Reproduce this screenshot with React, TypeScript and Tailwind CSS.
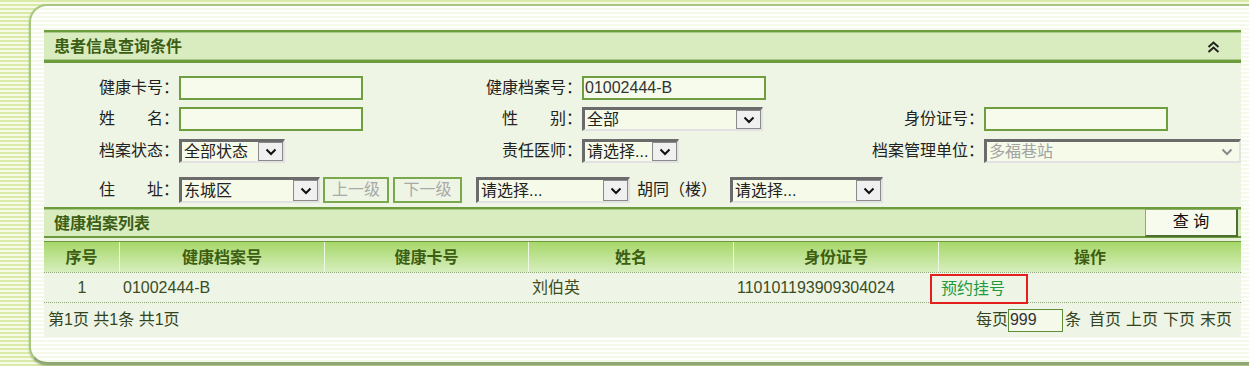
import React from "react";

const Chevron = ({ color = "#111" }: { color?: string }) => (
  <svg width="12" height="8" viewBox="0 0 12 8">
    <path d="M1.5 1.5 L6 6 L10.5 1.5" fill="none" stroke={color} strokeWidth="2" />
  </svg>
);

function Sel({ cls, text, disabled }: { cls: string; text: string; disabled?: boolean }) {
  return (
    <div
      className={`${cls} flex items-stretch border-t-[3px] border-l-[3px] border-t-[#6b6b6b] border-l-[#6b6b6b] border-r-2 border-b-2 border-r-[#e2e2e2] border-b-[#e2e2e2] bg-[#f5fae9]`}
    >
      <span
        className={`flex-1 pl-[2px] text-[16px] leading-none flex items-center whitespace-nowrap overflow-hidden ${
          disabled ? "text-[#a3a3a3]" : "text-[#222]"
        }`}
      >
        {text}
      </span>
      {disabled ? (
        <span className="w-[24px] flex items-center justify-center">
          <Chevron color="#8a8a8a" />
        </span>
      ) : (
        <span className="w-[25px] border border-[#8a8a8a] bg-[#f0f0f0] flex items-center justify-center">
          <Chevron />
        </span>
      )}
    </div>
  );
}

function Inp({ cls, text }: { cls: string; text?: string }) {
  return (
    <div
      className={`${cls} h-[24px] border-2 border-[#6f9e40] bg-[#f6fbeb] pl-[1px] text-[16px] leading-none flex items-center text-[#333]`}
    >
      {text}
    </div>
  );
}

function Label({ children }: { children: React.ReactNode }) {
  return (
    <div className="text-right text-[16px] leading-none text-[#222] whitespace-nowrap flex items-center justify-end">
      {children}
    </div>
  );
}

export default function App() {
  return (
    <div className="w-[1249px] h-[366px] overflow-hidden font-['Liberation_Sans','Noto_Sans_CJK_SC',sans-serif] bg-[repeating-linear-gradient(180deg,#d9eaa9_0px,#d9eaa9_2px,#f6fae6_2px,#f6fae6_4px)] pt-[4px] pl-[29px]">
      <div className="w-[1240px] h-[361px] rounded-l-[18px] border-2 border-[#a8c77e] border-b-[3px] border-b-[#8fa775] shadow-[0_1px_2px_rgba(60,80,30,0.35)] bg-[repeating-linear-gradient(180deg,#ffffff_0px,#ffffff_2px,#f4f9ea_2px,#f4f9ea_4px)] pt-[24px] pl-[13px]">
        <div className="w-[1197px]">
          {/* Query condition header */}
          <div className="h-[33px] border-t-2 border-b-[3px] border-[#6d9c3e] bg-[#d9ecbf] shadow-[inset_0_1px_0_#a9ca86,inset_0_-1px_0_#a9ca86] flex items-center justify-between pl-[10px] pr-[21px] pt-[2px]">
            <span className="text-[16px] font-bold text-[#3b5e14] leading-none">患者信息查询条件</span>
            <svg width="13" height="12" viewBox="0 0 13 12">
              <path d="M1.5 6 L6.5 1.5 L11.5 6" fill="none" stroke="#222" strokeWidth="2" />
              <path d="M1.5 11 L6.5 6.5 L11.5 11" fill="none" stroke="#222" strokeWidth="2" />
            </svg>
          </div>

          {/* Form */}
          <div className="bg-[#eef5e5] pt-[13px] pb-[4px]">
            <div className="grid grid-cols-[135px_268px_135px_267px_135px_257px] grid-rows-[24px_24px_24px] gap-y-[7px]">
              <Label>健康卡号：</Label>
              <div><Inp cls="w-[184px]" /></div>
              <Label>健康档案号：</Label>
              <div><Inp cls="w-[184px]" text="01002444-B" /></div>
              <div />
              <div />

              <Label>姓　　名：</Label>
              <div><Inp cls="w-[184px]" /></div>
              <Label>性　　别：</Label>
              <div><Sel cls="w-[181px] h-[24px]" text="全部" /></div>
              <Label>身份证号：</Label>
              <div><Inp cls="w-[184px]" /></div>

              <div className="mt-[1px] flex justify-end"><Label>档案状态：</Label></div>
              <div className="mt-[1px]"><Sel cls="w-[106px] h-[24px]" text="全部状态" /></div>
              <div className="mt-[1px] flex justify-end"><Label>责任医师：</Label></div>
              <div className="mt-[1px]"><Sel cls="w-[97px] h-[24px]" text="请选择..." /></div>
              <div className="mt-[1px] flex justify-end"><Label>档案管理单位：</Label></div>
              <div className="mt-[1px]"><Sel cls="w-[257px] h-[24px]" text="多福巷站" disabled /></div>
            </div>

            <div className="flex items-center h-[26px] mt-[15px]">
              <div className="w-[135px] flex justify-end"><Label>住　　址：</Label></div>
              <Sel cls="w-[141px] h-[26px]" text="东城区" />
              <div className="ml-[3px] w-[66px] h-[26px] border-2 border-[#7aa84c] bg-[#eef5e4] text-[#a9a9a9] text-[16px] flex items-center justify-center leading-none">上一级</div>
              <div className="ml-[4px] w-[69px] h-[26px] border-2 border-[#7aa84c] bg-[#eef5e4] text-[#a9a9a9] text-[16px] flex items-center justify-center leading-none">下一级</div>
              <Sel cls="ml-[14px] w-[154px] h-[26px]" text="请选择..." />
              <span className="ml-[7px] text-[16px] text-[#222] leading-none w-[86px] whitespace-nowrap">胡同（楼）</span>
              <Sel cls="ml-[7px] w-[153px] h-[26px]" text="请选择..." />
            </div>
          </div>

          {/* List header */}
          <div className="h-[31px] border-t-2 border-b-2 border-[#6d9c3e] bg-[#d9ecbf] shadow-[inset_0_1px_0_#a9ca86] flex items-center justify-between pl-[10px] pr-[3px]">
            <span className="text-[16px] font-bold text-[#3b5e14] leading-none pt-[3px]">健康档案列表</span>
            <div className="w-[93px] h-[28px] bg-[#f7fbee] border border-[#8daf6a] border-r-2 border-b-2 border-r-[#4f6e30] border-b-[#4f6e30] flex items-center justify-center text-[16px] text-[#111] leading-none">
              查 询
            </div>
          </div>
          <div className="h-[4px] bg-[#e7f1da] border-b border-[#6d9c3e]" />

          {/* Table header */}
          <div className="grid grid-cols-[76px_205px_204px_205px_205px_302px] h-[30px] bg-[linear-gradient(180deg,#a6d76a_0%,#bfe393_50%,#d6eebd_100%)] text-[16px] font-bold text-[#3d5e13]">
            {["序号", "健康档案号", "健康卡号", "姓名", "身份证号", "操作"].map((h, i) => (
              <div
                key={h}
                className={`flex items-center justify-center leading-none pt-[2px] ${i < 5 ? "border-r border-[#eef7e4]" : ""}`}
              >
                {h}
              </div>
            ))}
          </div>

          {/* Data row */}
          <div className="grid grid-cols-[76px_205px_204px_205px_205px_302px] h-[31px] bg-[#eef5e6] border-t border-b border-dotted border-[#8ea679] text-[16px] text-[#3a4d24]">
            <div className="flex items-center justify-center leading-none">1</div>
            <div className="flex items-center pl-[3px] leading-none">01002444-B</div>
            <div />
            <div className="flex items-center pl-[3px] leading-none">刘伯英</div>
            <div className="flex items-center pl-[3px] leading-none">110101193909304024</div>
            <div className="relative">
              <div className="absolute left-[-9px] top-[1px] w-[98px] h-[30px] border-2 border-[#e3201e] flex items-center pl-[9px] text-[#1f9a3e] leading-none">
                预约挂号
              </div>
            </div>
          </div>

          {/* Footer */}
          <div className="h-[34px] bg-[#eef5e6] flex items-center justify-between pl-[4px] pr-[9px] text-[16px] text-[#34441f] leading-none">
            <span>第1页 共1条 共1页</span>
            <div className="flex items-center">
              <span>每页</span>
              <div className="w-[55px] h-[23px] border border-[#5f8c36] bg-[#f4f9ea] flex items-center pl-[1px] text-[#333]">999</div>
              <span className="ml-[2px]">条</span>
              <span className="ml-[8px]">首页</span>
              <span className="ml-[5px]">上页</span>
              <span className="ml-[5px]">下页</span>
              <span className="ml-[5px]">末页</span>
            </div>
          </div>
        </div>
      </div>
    </div>
  );
}
